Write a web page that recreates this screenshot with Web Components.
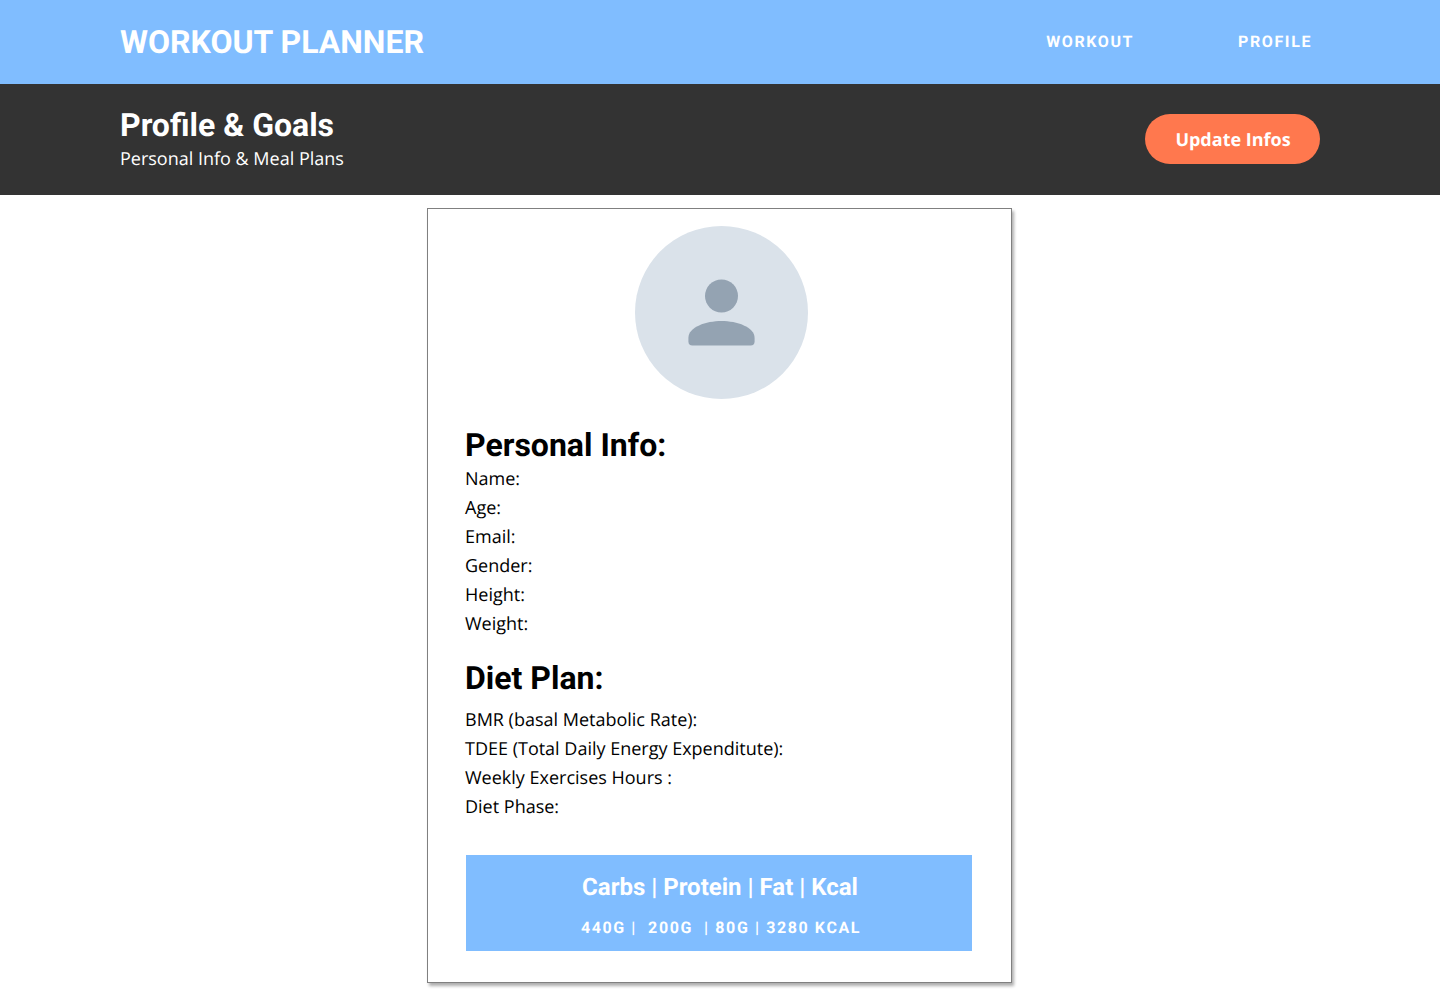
<!DOCTYPE html>
<html lang="en"><head><meta charset="utf-8"><title>Workout Planner</title>
<style>body{margin:0;background:#fff;font-family:"Open Sans",sans-serif;color:#000;text-rendering:geometricPrecision}</style></head>
<body><workout-app></workout-app>
<script>
const define=(name,html)=>{
  const t=document.createElement('template');t.innerHTML=html;
  customElements.define(name,class extends HTMLElement{
    constructor(){super();this.attachShadow({mode:'open'}).append(t.content.cloneNode(true));}
  });
};
define('site-header',`<style>
:host{display:flex;box-sizing:border-box;height:84px;padding:0 128px 0 120px;background:#80bdff;color:#fff;font-family:Roboto,sans-serif;align-items:center;justify-content:space-between}
h1{margin:1px 0 0;font:700 32px/39px Roboto,sans-serif}
nav{display:flex;gap:104px;font-weight:700;font-size:16px;line-height:20px;letter-spacing:1.6px}
</style><h1><slot></slot></h1><nav><slot name="link"></slot></nav>`);
define('page-banner',`<style>
:host{display:flex;box-sizing:border-box;height:111px;padding:22px 120px 0;background:#333;color:#fff;justify-content:space-between;align-items:flex-start}
h2{margin:0;font:700 32px/38px Roboto,sans-serif}p{margin:1px 0 0;font-size:18px;line-height:29px}
</style><div><h2><slot></slot></h2><p><slot name="subtitle"></slot></p></div><slot name="action"></slot>`);
define('pill-button',`<style>
:host{display:block;margin-top:8px}
button{box-sizing:border-box;width:175px;height:50px;padding:2px 0 0 1px;border:0;border-radius:25px;background:#ff784e;color:#fff;font:700 18px/29px "Open Sans",sans-serif;text-rendering:geometricPrecision}
</style><button><slot></slot></button>`);
define('user-avatar',`<style>
:host{display:flex;justify-content:center}svg{display:block;width:173px;height:173px}
</style><svg viewBox="0 0 173 173"><circle cx="86.5" cy="86.5" r="86.5" fill="#dae2ea"/><circle cx="86.5" cy="70" r="16.5" fill="#94a3b2"/><path d="M53.400 112C53.400 101 71 95 86.500 95S119.600 101 119.600 112V115.500Q119.600 119.600 115.500 119.600H57.500Q53.400 119.600 53.400 115.500Z" fill="#94a3b2"/></svg>`);
define('info-section',`<style>
:host{display:block;font-size:18px;line-height:29px}h2{margin:0 0 var(--title-gap,1px);font:700 32px/38px Roboto,sans-serif}
</style><h2><slot name="title"></slot></h2><slot></slot>`);
define('info-row',`<style>:host{display:block;height:29px;white-space:pre}</style><slot></slot>`);
define('macro-panel',`<style>
:host{display:flex;flex-direction:column;align-items:center;box-sizing:border-box;width:506px;height:96px;padding:18px 0 0 2px;background:#80bdff;color:#fff;font-family:Roboto,sans-serif;font-weight:700}
.names{font-size:24px;line-height:28px}.values{margin:17px 0 0 2px;font-size:16px;line-height:20px;letter-spacing:1.6px;white-space:pre}
</style><div class="names"><slot name="names"></slot></div><div class="values"><slot></slot></div>`);
define('profile-card',`<style>
:host{display:block;box-sizing:border-box;width:585px;height:775px;margin:13px 0 0 427px;padding:17px 37px 0;border:1px solid #808080;background:#fff;box-shadow:2px 3px 3px rgba(0,0,0,.32)}
user-avatar{margin-left:4px}
.personal{margin-top:27px}.diet{margin-top:20px;--title-gap:9px}macro-panel{margin:33px 0 0 1px}
</style><user-avatar></user-avatar>
<info-section class="personal"><span slot="title">Personal Info:</span><info-row>Name:</info-row><info-row>Age:</info-row><info-row>Email:</info-row><info-row>Gender:</info-row><info-row>Height:</info-row><info-row>Weight:</info-row></info-section>
<info-section class="diet"><span slot="title">Diet Plan:</span><info-row>BMR (basal Metabolic Rate):</info-row><info-row>TDEE (Total Daily Energy Expenditute):</info-row><info-row>Weekly Exercises Hours :</info-row><info-row>Diet Phase:</info-row></info-section>
<macro-panel><span slot="names">Carbs | Protein | Fat | Kcal</span>440G |  200G  | 80G | 3280 KCAL</macro-panel>`);
define('workout-app',`<style>:host{display:block;height:1000px;overflow:hidden}</style>
<site-header>WORKOUT PLANNER<span slot="link">WORKOUT</span><span slot="link">PROFILE</span></site-header>
<page-banner>Profile &amp; Goals<span slot="subtitle">Personal Info &amp; Meal Plans</span><pill-button slot="action">Update Infos</pill-button></page-banner>
<profile-card></profile-card>`);
</script></body></html>
